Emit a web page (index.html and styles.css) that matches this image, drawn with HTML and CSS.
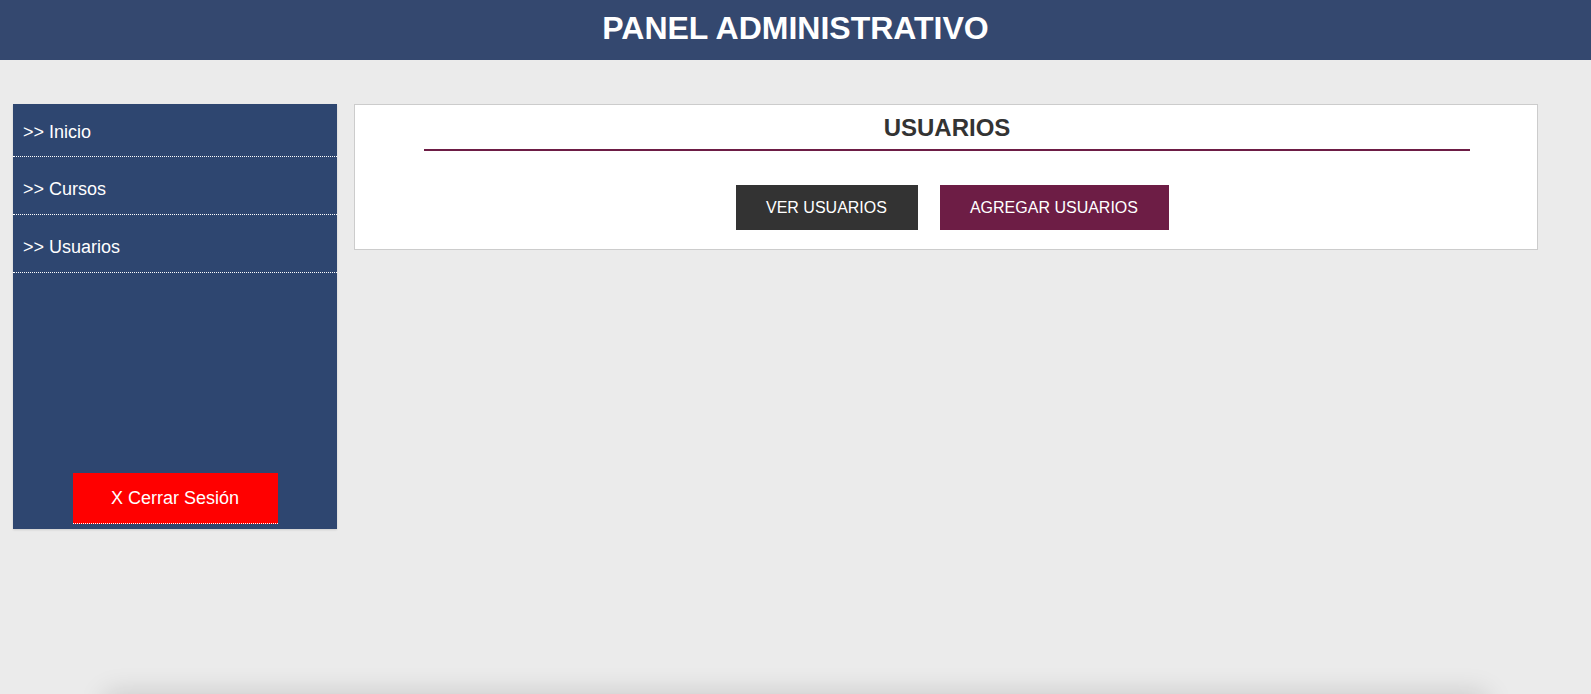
FILE: index.html
```html
<!DOCTYPE html>
<html lang="es">
<head>
<meta charset="utf-8">
<title>Panel Administrativo</title>
<link rel="stylesheet" href="styles.css">
</head>
<body>
<header class="topbar">
  <h1 class="topbar-title">PANEL ADMINISTRATIVO</h1>
</header>
<div class="layout">
  <aside class="sidebar">
    <nav class="menu">
      <a class="menu-item menu-item-first" href="#">&gt;&gt; Inicio</a>
      <a class="menu-item" href="#">&gt;&gt; Cursos</a>
      <a class="menu-item" href="#">&gt;&gt; Usuarios</a>
    </nav>
    <a class="logout" href="#">X Cerrar Sesión</a>
  </aside>
  <main class="card">
    <h2 class="card-title">USUARIOS</h2>
    <div class="actions">
      <a class="btn btn-dark" href="#">VER USUARIOS</a>
      <a class="btn btn-maroon" href="#">AGREGAR USUARIOS</a>
    </div>
  </main>
</div>
<footer class="footer"></footer>
</body>
</html>
```

FILE: styles.css
```css
html, body {
  margin: 0;
  padding: 0;
}
body {
  background: #ebebeb;
  font-family: "Liberation Sans", Arial, Helvetica, sans-serif;
  overflow: hidden;
}
a {
  text-decoration: none;
  color: inherit;
}
.topbar {
  height: 60px;
  background: #34486f;
  text-align: center;
}
.topbar-title {
  margin: 0;
  font-size: 32px;
  font-weight: bold;
  line-height: 57px;
  color: #ffffff;
}
.layout {
  display: flex;
  align-items: flex-start;
  gap: 17px;
  height: 634px;
  box-sizing: border-box;
  padding: 44px 0 0 13px;
}
.sidebar {
  width: 324px;
  height: 425px;
  background: #2e4670;
  display: flex;
  flex-direction: column;
  box-shadow: 0 1px 2px rgba(0, 0, 0, 0.12);
}
.menu {
  display: flex;
  flex-direction: column;
}
.menu-item {
  display: block;
  height: 49px;
  padding: 8px 0 0 10px;
  line-height: 49px;
  font-size: 18px;
  color: #ffffff;
  border-bottom: 1px dotted #ffffff;
}
.menu-item-first {
  height: 48px;
  padding-top: 4px;
  line-height: 48px;
}
.logout {
  margin: auto auto 5px;
  width: 205px;
  height: 50px;
  line-height: 51px;
  text-align: center;
  background: #ff0000;
  color: #ffffff;
  font-size: 18px;
  border-bottom: 1px dotted #ffffff;
}
.card {
  width: 1184px;
  box-sizing: border-box;
  background: #ffffff;
  border: 1px solid #cccccc;
  padding: 9px 0 19px;
}
.card-title {
  margin: 0 67px 0 69px;
  padding-bottom: 7px;
  font-size: 24px;
  line-height: 28px;
  font-weight: bold;
  color: #333333;
  text-align: center;
  border-bottom: 2px solid #6d1d45;
}
.actions {
  display: flex;
  justify-content: center;
  gap: 22px;
  margin-top: 34px;
  padding-left: 13px;
}
.btn {
  display: block;
  height: 45px;
  line-height: 45px;
  padding: 0 31px 0 30px;
  font-size: 16px;
  color: #ffffff;
}
.btn-dark {
  background: #333333;
}
.btn-maroon {
  background: #6d1d45;
  padding: 0 31px 0 30px;
}
.footer {
  width: 1380px;
  height: 60px;
  margin: 0 auto;
  background: #ebebeb;
  box-shadow: 0 0 28px rgba(0, 0, 0, 0.16);
}
```
